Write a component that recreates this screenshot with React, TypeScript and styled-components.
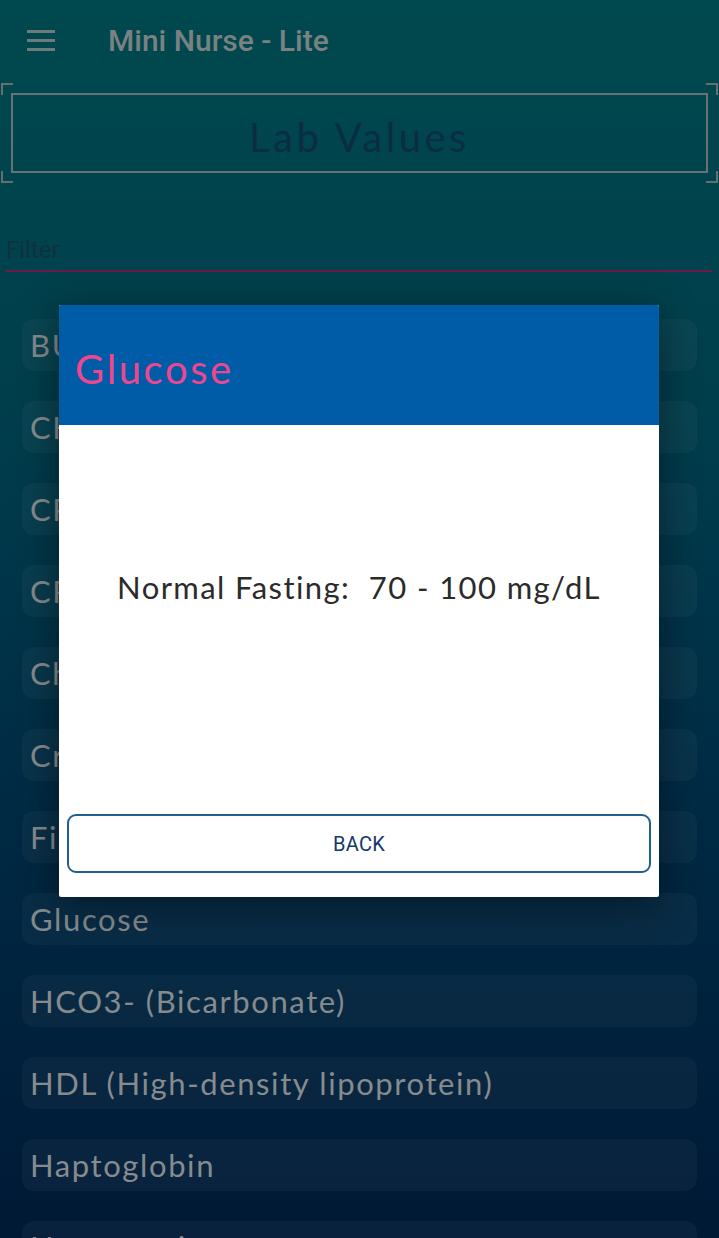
import * as React from 'react';
import styled, { createGlobalStyle } from 'styled-components';

const GlobalStyle = createGlobalStyle`
  html, body {
    margin: 0;
    padding: 0;
    background: #001a35;
  }
  * { box-sizing: border-box; }
`;

const Page = styled.div`
  position: relative;
  width: 719px;
  height: 1238px;
  overflow: hidden;
  background: linear-gradient(180deg, #00494e 0%, #003d4c 35%, #002a44 65%, #001935 100%);
  font-family: Lato, "Noto Sans", sans-serif;
`;

const AppBar = styled.header`
  height: 80px;
  display: flex;
  align-items: center;
  padding: 0 0 0 27px;
`;

const MenuButton = styled.div`
  width: 28px;
  height: 21px;
  display: flex;
  flex-direction: column;
  justify-content: space-between;
  margin-right: 53px;

  span {
    display: block;
    height: 3px;
    background: #6d7a7b;
  }
`;

const AppTitle = styled.h1`
  margin: 0;
  font-family: Roboto, "Liberation Sans", sans-serif;
  font-weight: 500;
  font-size: 30px;
  color: #7a8181;
`;

const FrameWrap = styled.div`
  position: relative;
  margin: 3px 0 0 0;
  height: 100px;
  padding: 10px 11px;
`;

const Corner = styled.div<{ $top?: boolean; $left?: boolean }>`
  position: absolute;
  width: 12px;
  height: 12px;
  ${({ $top }) => ($top ? 'top: 0;' : 'bottom: 0;')}
  ${({ $left }) => ($left ? 'left: 1px;' : 'right: 1px;')}
  border-color: #676e72;
  border-style: solid;
  border-width: 0;
  ${({ $top }) => ($top ? 'border-top-width: 2px;' : 'border-bottom-width: 2px;')}
  ${({ $left }) => ($left ? 'border-left-width: 2px;' : 'border-right-width: 2px;')}
`;

const Frame = styled.div`
  height: 80px;
  border: 2px solid #6a7175;
  display: flex;
  align-items: center;
  justify-content: center;
  padding-top: 8px;
`;

const FrameTitle = styled.h2`
  margin: 0;
  font-weight: 400;
  font-size: 40px;
  letter-spacing: 3.5px;
  color: #0b2c45;
`;

const FilterField = styled.div`
  margin: 53px 7px 0 5px;
  padding: 0 0 6px 1px;
  border-bottom: 2px solid #6a1c46;
  font-family: Roboto, "Liberation Sans", sans-serif;
  font-size: 24px;
  line-height: 28px;
  color: #0e323e;
`;

const List = styled.ul`
  list-style: none;
  margin: 47px 0 0;
  padding: 0 22px;
  display: flex;
  flex-direction: column;
  gap: 30px;
`;

const Item = styled.li`
  height: 52px;
  border-radius: 12px;
  background: rgba(255, 255, 255, 0.035);
  display: flex;
  align-items: center;
  padding-left: 8px;
  font-size: 31px;
  letter-spacing: 1.6px;
  color: #868b8e;
  white-space: nowrap;
`;

const Overlay = styled.div`
  position: absolute;
  inset: 0;
  display: flex;
  justify-content: flex-start;
  padding: 305px 0 0 59px;
`;

const Dialog = styled.div`
  width: 600px;
  height: 592px;
  background: #ffffff;
  border-radius: 2px;
  box-shadow: 0 8px 40px rgba(0, 0, 0, 0.45);
  display: flex;
  flex-direction: column;
  overflow: hidden;
`;

const DialogHeader = styled.div`
  height: 120px;
  background: #005ca6;
  display: flex;
  align-items: center;
  padding: 8px 0 0 16px;
`;

const DialogTitle = styled.h3`
  margin: 0;
  font-weight: 400;
  font-size: 40px;
  letter-spacing: 2.6px;
  color: #f0468f;
`;

const DialogBody = styled.div`
  flex: 1;
  display: flex;
  align-items: center;
  justify-content: center;
  padding-bottom: 66px;
  font-size: 31px;
  letter-spacing: 1.4px;
  color: #2b2b2b;
  white-space: pre;
`;

const DialogActions = styled.div`
  padding: 0 8px 24px;
`;

const BackButton = styled.button`
  width: 100%;
  height: 59px;
  border: 2px solid #215f8f;
  border-radius: 9px;
  background: #ffffff;
  font-family: Roboto, "Liberation Sans", sans-serif;
  font-size: 20px;
  color: #15386b;
  letter-spacing: 0.3px;
`;

const labs = [
  'BUN (Blood Urea Nitrogen)',
  'CK (Creatine Kinase)',
  'CPK',
  'CRP (C-reactive protein)',
  'Chloride',
  'Creatinine',
  'Fibrinogen',
  'Glucose',
  'HCO3- (Bicarbonate)',
  'HDL (High-density lipoprotein)',
  'Haptoglobin',
  'Hematocrit',
];

export default function App() {
  return (
    <>
      <GlobalStyle />
      <Page>
        <AppBar>
          <MenuButton>
            <span />
            <span />
            <span />
          </MenuButton>
          <AppTitle>Mini Nurse - Lite</AppTitle>
        </AppBar>
        <FrameWrap>
          <Corner $top $left />
          <Corner $left />
          <Corner $top />
          <Corner />
          <Frame>
            <FrameTitle>Lab Values</FrameTitle>
          </Frame>
        </FrameWrap>
        <FilterField>Filter</FilterField>
        <List>
          {labs.map((lab) => (
            <Item key={lab}>{lab}</Item>
          ))}
        </List>
        <Overlay>
          <Dialog>
            <DialogHeader>
              <DialogTitle>Glucose</DialogTitle>
            </DialogHeader>
            <DialogBody>{'Normal Fasting:  70 - 100 mg/dL'}</DialogBody>
            <DialogActions>
              <BackButton>BACK</BackButton>
            </DialogActions>
          </Dialog>
        </Overlay>
      </Page>
    </>
  );
}
